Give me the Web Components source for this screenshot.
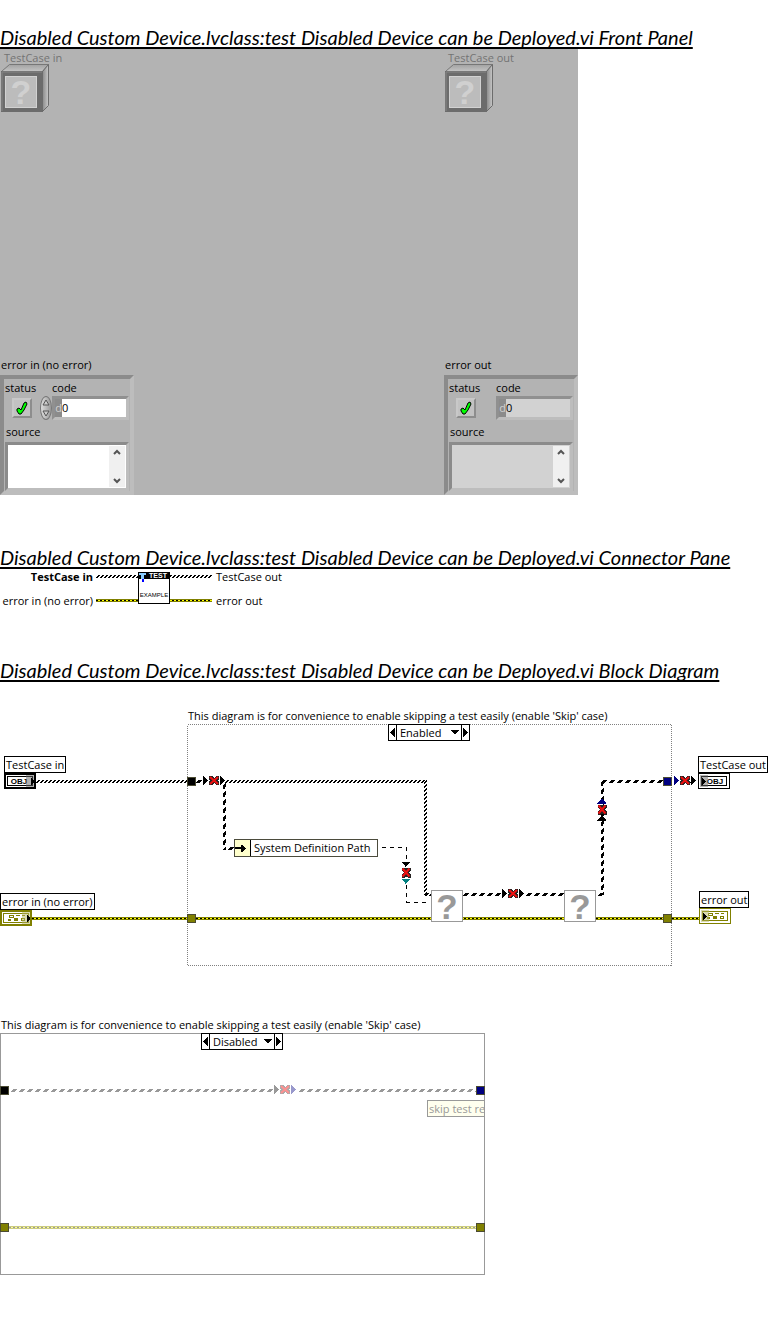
<!DOCTYPE html>
<html lang="en">
<head>
<meta charset="utf-8">
<title>Disabled Custom Device.lvclass:test Disabled Device can be Deployed.vi</title>
<style>
  body {
    margin: 0;
    background: #fff;
    color: #000;
    font: 11px/16px "Open Sans", "Noto Sans", sans-serif;
  }
</style>
</head>
<body>
<vi-report></vi-report>

<script>
const define = (name, html, setup) => {
  const template = document.createElement('template');
  template.innerHTML = html;
  customElements.define(name, class extends HTMLElement {
    constructor() {
      super();
      this.attachShadow({ mode: 'open' }).append(template.content.cloneNode(true));
    }
    connectedCallback() {
      if (setup) setup(this, this.shadowRoot);
    }
  });
};

/* Section title */
define('vi-heading', `
  <style>
    :host { display: block; }
    h2 {
      margin: 0; white-space: nowrap;
      font: italic 400 20px/24px Lato, sans-serif;
      text-decoration: underline; text-decoration-thickness: 2px;
      text-underline-offset: 2px; text-decoration-skip-ink: none;
    }
  </style>
  <h2><slot></slot></h2>
`);

/* Class control shown as a greyed 3D cube */
define('vi-class-control', `
  <style>
    :host { display: flex; flex-direction: column; color: #737373; }
    span { padding-left: 4px; line-height: 18px; }
    svg { display: block; margin-top: -3px; }
  </style>
  <span><slot></slot></span>
  <svg width="50" height="48" viewBox="0 0 50 48" aria-hidden="true">
    <defs>
      <linearGradient id="top" x1="0" y1="0" x2="0" y2="1"><stop offset="0" stop-color="#a2a2a2"/><stop offset="1" stop-color="#c4c4c4"/></linearGradient>
      <linearGradient id="side" x1="0" y1="0" x2="1" y2="0"><stop offset="0" stop-color="#8a8a8a"/><stop offset="1" stop-color="#c8c8c8"/></linearGradient>
    </defs>
    <path d="M1.500 7.500L9.500 .5H48.500L42.500 7.500Z" fill="url(#top)" stroke="#777"/>
    <path d="M42.500 7.500L48.500 .5V41.500L42.500 47.500Z" fill="url(#side)" stroke="#6c6c6c"/>
    <rect x="1" y="7" width="42" height="41" fill="#6c6c6c"/>
    <path d="M2 47V8H42" fill="none" stroke="#858585"/>
    <rect x="5" y="12" width="32" height="32" fill="#d2d2d2"/>
    <rect x="6" y="13" width="30" height="30" fill="#bcbcbc"/>
    <text x="21" y="40" text-anchor="middle" font-family="Liberation Sans, sans-serif" font-weight="700" font-size="34" fill="#d0d0d0">?</text>
  </svg>
`);

/* Error cluster: status, code, source */
define('vi-error-cluster', `
  <style>
    :host { display: block; --field: #fff; }
    :host([indicator]) { --field: #d2d2d2; }
    .caption { padding-left: 1px; line-height: 16px; padding-bottom: 2px; }
    .box {
      display: grid; grid-template-columns: 35px 12px 1fr; box-sizing: border-box;
      height: 120px; padding: 1px 0 0 1px;
      border: 4px solid; border-color: #8b8b8b #bdbdbd #bdbdbd #8b8b8b;
      background: #b3b3b3; align-content: start;
    }
    label { white-space: nowrap; line-height: 16px; }
    .status { grid-column: 1 / 3; }
    .led {
      display: grid; place-items: center; box-sizing: border-box;
      position: relative; width: 20px; height: 20px; margin: 2px 0 0 7px;
      border: 2px solid; border-color: #c8c8c8 #8d8d8d #8d8d8d #c8c8c8;
      background: #c2c2c2;
    }
    .led input { position: absolute; inset: 0; margin: 0; appearance: none; }
    .spin {
      display: flex; flex-direction: column; width: 12px; height: 24px; overflow: hidden;
      border: 1px solid #777; border-radius: 6px / 12px; box-sizing: border-box;
      background: linear-gradient(90deg, #ddd, #999);
    }
    :host([indicator]) .spin { visibility: hidden; }
    button { display: grid; place-items: center; flex: 1; min-height: 0; padding: 0; border: 0; background: none; }
    .number {
      display: flex; box-sizing: border-box; width: 77px; height: 24px;
      border: 3px solid; border-color: #909090 #bdbdbd #bdbdbd #909090;
    }
    .radix { width: 7px; background: #8b8b8b; color: #d0d0d0; text-align: right; line-height: 18px; }
    input.value {
      flex: 1; min-width: 0; padding: 0; border: 0; border-radius: 0;
      background: var(--field); color: #000; font: inherit;
    }
    .source { grid-column: 1 / 4; padding: 4px 0 2px 1px; }
    .text {
      grid-column: 1 / 4; display: flex; box-sizing: border-box; width: 124px; height: 49px;
      border: 3px solid; border-color: #8b8b8b #bdbdbd #bdbdbd #8b8b8b; background: var(--field);
    }
    textarea { flex: 1; min-width: 0; padding: 0; border: 0; resize: none; overflow: hidden; background: none; font: inherit; }
    .scroll { display: flex; flex-direction: column; justify-content: space-between; width: 16px; margin: 1px; background: #f0f0f0; }
    .scroll button { flex: none; height: 12px; }
    svg { display: block; }
  </style>
  <div class="caption"><slot></slot></div>
  <div class="box">
    <label class="status" for="status">status</label>
    <label for="code">code</label>
    <div class="led">
      <input id="status" type="checkbox" checked>
      <svg width="14" height="14" viewBox="0 0 14 14" aria-hidden="true">
        <path d="M2 8L4 7L6 9L9 2L11 1L12 3L9 9L6 13H4L2 10Z" fill="#0f0" stroke="#000"/>
      </svg>
    </div>
    <div class="spin">
      <button aria-label="Increment"><svg width="8" height="7"><path d="M4 1L7 6H1Z" fill="#ccc" stroke="#555"/></svg></button>
      <button aria-label="Decrement"><svg width="8" height="7"><path d="M4 6L7 1H1Z" fill="#ccc" stroke="#555"/></svg></button>
    </div>
    <div class="number"><span class="radix">d</span><input class="value" id="code" value="0"></div>
    <label class="source" for="source">source</label>
    <div class="text">
      <textarea id="source"></textarea>
      <div class="scroll">
        <button aria-label="Scroll up"><svg width="8" height="6"><path d="M1 5L4 2L7 5" fill="none" stroke="#555" stroke-width="2"/></svg></button>
        <button aria-label="Scroll down"><svg width="8" height="6"><path d="M1 1L4 4L7 1" fill="none" stroke="#555" stroke-width="2"/></svg></button>
      </div>
    </div>
  </div>
`);

define('vi-front-panel', `
  <style>
    :host {
      display: flex; flex-direction: column; justify-content: space-between; box-sizing: border-box;
      max-width: 578px; min-height: 446px; background: #b3b3b3;
    }
    .row { display: flex; justify-content: space-between; }
    .row > * { box-sizing: border-box; width: 134px; }
  </style>
  <div class="row">
    <vi-class-control>TestCase in</vi-class-control>
    <vi-class-control>TestCase out</vi-class-control>
  </div>
  <div class="row">
    <vi-error-cluster>error in (no error)</vi-error-cluster>
    <vi-error-cluster indicator>error out</vi-error-cluster>
  </div>
`);

/* Hatched fills shared by every wire drawing */
const wirePatterns = `
  <defs>
    <pattern id="obj" width="4" height="3" patternUnits="userSpaceOnUse">
      <path d="M2 0h2v1h-2zM1 1h2v1h-2zM0 2h2v1h-2z"/>
    </pattern>
    <pattern id="objv" width="3" height="4" patternUnits="userSpaceOnUse">
      <path d="M2 0h1v2h-1zM1 1h1v2h-1zM0 2h1v2h-1z"/>
    </pattern>
    <pattern id="cut" width="8" height="3" patternUnits="userSpaceOnUse">
      <path d="M2 0h4v1h-4zM1 1h4v1h-4zM0 2h4v1h-4z" fill="var(--wire, #000)"/>
    </pattern>
    <pattern id="cutv" width="3" height="8" patternUnits="userSpaceOnUse">
      <path d="M2 0h1v4h-1zM1 1h1v5h-1zM0 2h1v4h-1z" fill="var(--wire, #000)"/>
    </pattern>
    <pattern id="err" width="4" height="3" patternUnits="userSpaceOnUse">
      <path d="M0 0h4v3h-4z" fill="var(--err, #808000)"/>
      <path d="M0 1h2v1h-2z" fill="var(--err-dark, #000)"/>
      <path d="M2 1h2v1h-2z" fill="var(--err-light, #ff0)"/>
    </pattern>
  </defs>`;

define('vi-connector-pane', `
  <style>
    :host {
      display: grid; grid-template-columns: 93px 116px auto; grid-template-rows: 16px 19px;
      justify-content: start; column-gap: 3px;
    }
    .in { text-align: right; white-space: nowrap; line-height: 16px; }
    .out { white-space: nowrap; line-height: 16px; padding-left: 1px; }
    .low { line-height: 32px; }
    svg { display: block; grid-column: 2; grid-row: 1 / 3; }
  </style>
  <b class="in">TestCase in</b>
  <svg width="116" height="35" viewBox="0 0 116 35" shape-rendering="crispEdges" aria-hidden="true">
    ${wirePatterns}
    <g transform="translate(0 6)"><rect width="116" height="3" fill="url(#obj)"/></g>
    <g transform="translate(0 30)"><rect width="116" height="3" fill="url(#err)"/></g>
    <rect x="42.500" y="3.500" width="31" height="31" fill="#fff" stroke="#000"/>
    <rect x="42" y="3" width="32" height="7"/>
    <path d="M43 4h7v2h-2v4h-3v-4h-2z" fill="#8cf"/>
    <path d="M46 10h2v3h-2z" fill="#00f"/>
    <text x="62" y="9" text-anchor="middle" font-family="Liberation Sans, sans-serif" font-weight="700" font-size="7" fill="#fff">TEST</text>
    <text x="58" y="28" text-anchor="middle" font-family="Liberation Sans, sans-serif" font-size="6">EXAMPLE</text>
  </svg>
  <span class="out">TestCase out</span>
  <span class="in low">error in (no error)</span>
  <span class="out low">error out</span>
`);

/* Free-standing label on a diagram */
define('vi-label', `
  <style>
    :host {
      display: block; box-sizing: border-box; height: 17px; padding: 0 1px; border: 1px solid #000;
      background: #fff; white-space: nowrap; line-height: 15px;
    }
  </style>
  <slot></slot>
`);

define('vi-obj-terminal', `
  <style>:host { display: block; } svg { display: block; }</style>
  <svg width="32" height="16" viewBox="0 0 32 16" shape-rendering="crispEdges" aria-hidden="true">
    <rect width="32" height="16"/>
    <rect class="pad" x="2" y="2" width="28" height="12" fill="#fff"/>
    <rect x="3.500" y="3.500" width="25" height="9" fill="#fff" stroke="#000"/>
    <text class="name" x="15" y="11" text-anchor="middle" font-family="Liberation Sans, sans-serif" font-weight="700" font-size="8">OBJ</text>
    <rect class="port" x="22" y="2" width="8" height="12" fill="#666" fill-opacity=".5"/>
    <path class="tip" d="M27 5v7l3-3v-1z"/>
  </svg>
`, (host, root) => {
  if (!host.hasAttribute('sink')) return;
  const pad = root.querySelector('.pad');
  pad.setAttribute('x', 1); pad.setAttribute('y', 1);
  pad.setAttribute('width', 30); pad.setAttribute('height', 14);
  root.querySelector('.port').setAttribute('x', 2);
  root.querySelector('.name').setAttribute('x', 17);
  root.querySelector('.tip').setAttribute('d', 'M4 5v7l4-3v-1z');
});

define('vi-error-terminal', `
  <style>:host { display: block; } svg { display: block; }</style>
  <svg width="32" height="16" viewBox="0 0 32 16" shape-rendering="crispEdges" aria-hidden="true">
    <rect width="32" height="16" fill="#808000"/>
    <rect class="pad" x="2" y="2" width="28" height="12" fill="#fff"/>
    <rect x="3.500" y="3.500" width="25" height="9" fill="#fff" stroke="#808000"/>
    <path d="M9 5h5v3h-5zM16 5h4v1h-4zM22 5h3v1h-3zM8 9h3v2h-3zM14 8h4v3h-4zM21 8h4v3h-4z" fill="#808000"/>
    <path d="M10 6h3v1h-3zM22 9h2v1h-2z" fill="#fff"/>
    <rect class="port" x="22" y="2" width="8" height="12" fill="#b3b366" fill-opacity=".5"/>
    <path class="tip" d="M27 5v7l3-3v-1z"/>
  </svg>
`, (host, root) => {
  if (!host.hasAttribute('sink')) return;
  const pad = root.querySelector('.pad');
  pad.setAttribute('x', 1); pad.setAttribute('y', 1);
  pad.setAttribute('width', 30); pad.setAttribute('height', 14);
  root.querySelector('.port').setAttribute('x', 2);
  root.querySelector('.tip').setAttribute('d', 'M4 5v7l4-3v-1z');
});

define('vi-tunnel', `
  <style>
    :host { display: block; box-sizing: border-box; width: 9px; height: 9px; border: 1px solid #4b4b32; background: var(--fill, #000); }
  </style>
`);

/* Broken wire mark: an arrow, a red cross, an arrow */
define('vi-broken-mark', `
  <style>
    :host { display: block; width: 24px; height: 11px; --a: #000; --b: #000; }
    :host([turn="down"]) { transform: rotate(90deg); }
    :host([turn="up"]) { transform: rotate(-90deg); }
    svg { display: block; }
  </style>
  <svg width="24" height="11" viewBox="0 0 24 11" shape-rendering="crispEdges" aria-hidden="true">
    <path d="M1 1v9l5-4v-1z" style="fill:var(--a)"/>
    <path d="M18 1v9l5-4v-1z" style="fill:var(--b)"/>
    <path d="M7 1h3l2 2l2-2h3v3l-1 1.500l1 1.500v3h-3l-2-2l-2 2h-3v-3l1-1.500l-1-1.500z" style="fill:var(--edge, #222)"/>
    <path d="M8 2L16 9M16 2L8 9" style="stroke:var(--cross, #f01010)" stroke-width="2" fill="none" shape-rendering="auto"/>
  </svg>
`);

define('vi-unknown-node', `
  <style>:host { display: block; } svg { display: block; overflow: visible; }</style>
  <svg width="32" height="32" viewBox="0 0 32 32" aria-hidden="true">
    <rect x=".5" y=".5" width="31" height="31" fill="#fff" stroke="#999"/>
    <text x="16" y="29" text-anchor="middle" font-family="Liberation Sans, sans-serif" font-weight="700" font-size="35" fill="#999">?</text>
  </svg>
`);

define('vi-property-node', `
  <style>
    :host { display: flex; box-sizing: border-box; width: 144px; height: 18px; border: 1px solid #4b4b3c; background: #fff; line-height: 16px; white-space: nowrap; }
    .ref { width: 15px; border-right: 1px solid #000; background: #ffffcc; }
    .name { padding-left: 3px; }
    svg { display: block; }
  </style>
  <span class="ref"><svg width="15" height="16" aria-hidden="true" shape-rendering="crispEdges"><path d="M0 7h6v-2h1l4 3v1l-4 3h-1v-3h-6z"/></svg></span>
  <span class="name"><slot></slot></span>
`);

define('vi-case-selector', `
  <style>
    :host { display: flex; box-sizing: border-box; width: 82px; height: 17px; border: 1px solid #000; background: #fff; }
    button { display: grid; place-items: center; width: 7px; padding: 0; border: 0; background: #fff; }
    .pick { position: relative; flex: 1; display: flex; border: solid #000; border-width: 0 1px; }
    select {
      flex: 1; min-width: 0; appearance: none; padding: 0 0 0 3px; border: 0; border-radius: 0;
      background: none; color: #000; font: inherit; line-height: 15px;
    }
    .caret { position: absolute; right: 2px; top: 5px; pointer-events: none; }
    svg { display: block; }
  </style>
  <button aria-label="Previous case"><svg width="7" height="9" shape-rendering="crispEdges"><path d="M6 0v9l-5-4v-1z"/></svg></button>
  <span class="pick">
    <select aria-label="Case"><option></option></select>
    <svg class="caret" width="9" height="5" shape-rendering="crispEdges"><path d="M0 0h9l-4 4h-1z"/></svg>
  </span>
  <button aria-label="Next case"><svg width="7" height="9" shape-rendering="crispEdges"><path d="M1 0v9l5-4v-1z"/></svg></button>
`, (host, root) => {
  root.querySelector('option').textContent = host.getAttribute('value');
});

/* Places nodes on a free canvas from their data-at="x,y" */
const place = (host, root) => {
  for (const node of root.querySelectorAll('[data-at]')) {
    const [x, y] = node.dataset.at.split(',');
    node.style.cssText += `;position:absolute;left:${x}px;top:${y}px`;
  }
};

define('vi-enabled-diagram', `
  <style>
    :host { display: block; position: relative; height: 270px; }
    .wires { display: block; }
    .caption { white-space: nowrap; line-height: 16px; }
    .navy { --fill: #000080; }
    .olive { --fill: #808000; }
  </style>
  <svg class="wires" width="768" height="270" viewBox="0 0 768 270" shape-rendering="crispEdges" aria-hidden="true">
    ${wirePatterns}
    <rect x="187.500" y="24.500" width="484" height="241" fill="none" stroke="#808080" stroke-dasharray="1 1"/>
    <g transform="translate(36 80)"><rect width="151" height="3" fill="url(#obj)"/></g>
    <g transform="translate(196 80)"><rect width="8" height="3" fill="url(#cut)"/></g>
    <g transform="translate(225 80)"><rect width="201" height="3" fill="url(#obj)"/></g>
    <g transform="translate(424 80)"><rect width="3" height="115" fill="url(#objv)"/></g>
    <g transform="translate(425 193)"><rect width="6" height="3" fill="url(#obj)"/></g>
    <g transform="translate(223 83)"><rect width="3" height="67" fill="url(#cutv)"/></g>
    <g transform="translate(228 147)"><rect width="6" height="3" fill="url(#cut)"/></g>
    <path d="M382 147.500H407M406.500 147V161M406.500 185V202M406 202.500H430" fill="none" stroke="#000" stroke-dasharray="4 4"/>
    <g transform="translate(463 193)"><rect width="39" height="3" fill="url(#cut)"/></g>
    <g transform="translate(526 193)"><rect width="38" height="3" fill="url(#cut)"/></g>
    <g transform="translate(598 193)"><rect width="5" height="3" fill="url(#cut)"/></g>
    <g transform="translate(601 80)"><rect width="3" height="115" fill="url(#cutv)"/></g>
    <g transform="translate(601 80)"><rect width="62" height="3" fill="url(#cut)"/></g>
    <g transform="translate(690 80)"><rect width="8" height="3" fill="url(#cut)"/></g>
    <g transform="translate(32 217)"><rect width="667" height="3" fill="url(#err)"/></g>
  </svg>
  <div class="caption" data-at="188,8">This diagram is for convenience to enable skipping a test easily (enable 'Skip' case)</div>
  <vi-case-selector data-at="388,24" value="Enabled"></vi-case-selector>
  <vi-label data-at="4,56">TestCase in</vi-label>
  <vi-obj-terminal data-at="4,73"></vi-obj-terminal>
  <vi-label data-at="0,193">error in (no error)</vi-label>
  <vi-error-terminal data-at="0,210"></vi-error-terminal>
  <vi-tunnel data-at="187,77"></vi-tunnel>
  <vi-tunnel class="olive" data-at="187,214"></vi-tunnel>
  <vi-tunnel class="navy" data-at="663,77"></vi-tunnel>
  <vi-tunnel class="olive" data-at="663,214"></vi-tunnel>
  <vi-broken-mark data-at="202,75"></vi-broken-mark>
  <vi-broken-mark data-at="394,167" turn="down" style="--b:#008080"></vi-broken-mark>
  <vi-broken-mark data-at="501,188"></vi-broken-mark>
  <vi-broken-mark data-at="590,104" turn="up" style="--b:#000080"></vi-broken-mark>
  <vi-broken-mark data-at="673,75" style="--a:#000080"></vi-broken-mark>
  <vi-property-node data-at="234,139">System Definition Path</vi-property-node>
  <vi-unknown-node data-at="431,190"></vi-unknown-node>
  <vi-unknown-node data-at="564,190"></vi-unknown-node>
  <vi-label data-at="698,56">TestCase out</vi-label>
  <vi-obj-terminal sink data-at="698,73"></vi-obj-terminal>
  <vi-label data-at="699,191">error out</vi-label>
  <vi-error-terminal sink data-at="699,208"></vi-error-terminal>
`, place);

define('vi-disabled-diagram', `
  <style>
    :host { display: block; --wire: #999; --err: #cccc80; --err-dark: #999; --err-light: #ffff99; }
    .caption { padding-left: 1px; white-space: nowrap; line-height: 16px; }
    .frame { position: relative; max-width: 485px; height: 242px; overflow: hidden; }
    .wires { display: block; }
    .navy { --fill: #000080; }
    .olive { --fill: #808000; }
    .faded { --a: #999; --b: #9999cc; --edge: #aaa; --cross: #ff9090; }
    vi-label { width: 80px; border-color: #999; background: #ffffee; color: #999; }
  </style>
  <div class="caption">This diagram is for convenience to enable skipping a test easily (enable 'Skip' case)</div>
  <div class="frame">
    <svg class="wires" width="485" height="242" viewBox="0 0 485 242" shape-rendering="crispEdges" aria-hidden="true">
      ${wirePatterns}
      <g transform="translate(11 56)"><rect width="263" height="3" fill="url(#cut)"/></g>
      <g transform="translate(299 56)"><rect width="177" height="3" fill="url(#cut)"/></g>
      <g transform="translate(9 193)"><rect width="467" height="3" fill="url(#err)"/></g>
    </svg>
    <vi-case-selector data-at="201,0" value="Disabled"></vi-case-selector>
    <vi-broken-mark class="faded" data-at="273,51"></vi-broken-mark>
    <vi-label data-at="427,67">skip test re</vi-label>
    <svg data-at="0,0" width="485" height="242" aria-hidden="true" shape-rendering="crispEdges"><path d="M.5 .5H201M283 .5H484.500V241.500H.5V0" fill="none" stroke="#999"/></svg>
    <vi-tunnel data-at="0,53"></vi-tunnel>
    <vi-tunnel class="navy" data-at="476,53"></vi-tunnel>
    <vi-tunnel class="olive" data-at="0,190"></vi-tunnel>
    <vi-tunnel class="olive" data-at="476,190"></vi-tunnel>
  </div>
`, place);

define('vi-report', `
  <style>
    :host { display: flex; flex-direction: column; padding: 25px 0 50px; overflow: hidden; }
    vi-connector-pane { margin-bottom: 54px; }
    vi-front-panel { margin-bottom: 50px; width: 100%; }
    vi-enabled-diagram { margin: 18px 0 47px; }
  </style>
  <vi-heading>Disabled Custom Device.lvclass:test Disabled Device can be Deployed.vi Front Panel</vi-heading>
  <vi-front-panel></vi-front-panel>
  <vi-heading>Disabled Custom Device.lvclass:test Disabled Device can be Deployed.vi Connector Pane</vi-heading>
  <vi-connector-pane></vi-connector-pane>
  <vi-heading>Disabled Custom Device.lvclass:test Disabled Device can be Deployed.vi Block Diagram</vi-heading>
  <vi-enabled-diagram></vi-enabled-diagram>
  <vi-disabled-diagram></vi-disabled-diagram>
`);
</script>
</body>
</html>
